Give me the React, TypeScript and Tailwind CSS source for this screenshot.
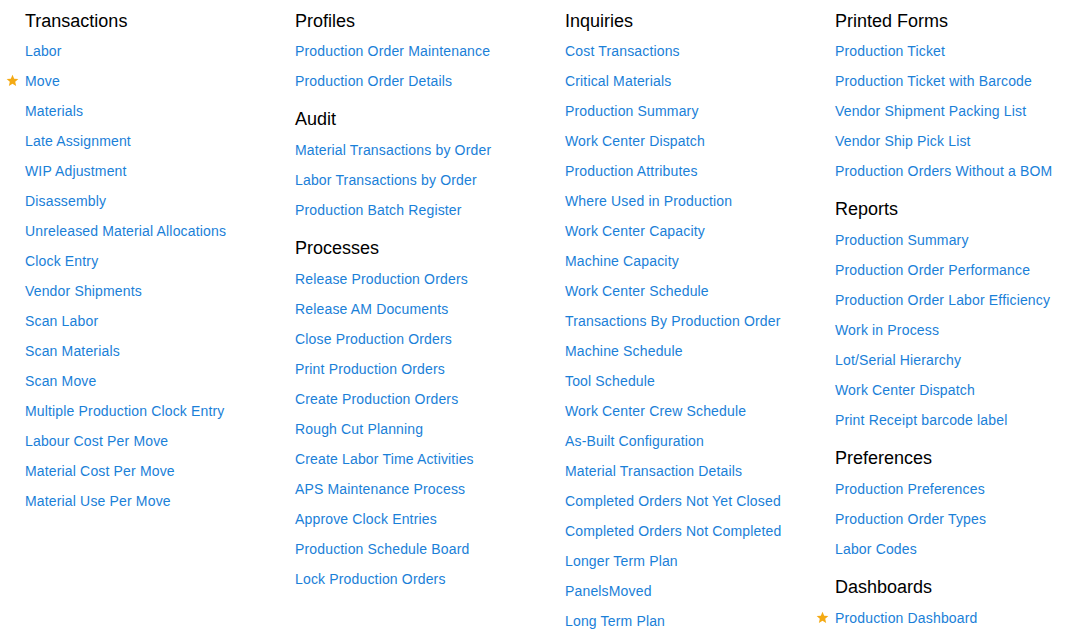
type Section = { title: string; links: { label: string; star?: boolean }[] };

const l = (labels: string[]) => labels.map((label) => ({ label }));

const columns: Section[][] = [
  [
    {
      title: 'Transactions',
      links: [
        { label: 'Labor' },
        { label: 'Move', star: true },
        ...l([
          'Materials',
          'Late Assignment',
          'WIP Adjustment',
          'Disassembly',
          'Unreleased Material Allocations',
          'Clock Entry',
          'Vendor Shipments',
          'Scan Labor',
          'Scan Materials',
          'Scan Move',
          'Multiple Production Clock Entry',
          'Labour Cost Per Move',
          'Material Cost Per Move',
          'Material Use Per Move',
        ]),
      ],
    },
  ],
  [
    { title: 'Profiles', links: l(['Production Order Maintenance', 'Production Order Details']) },
    {
      title: 'Audit',
      links: l(['Material Transactions by Order', 'Labor Transactions by Order', 'Production Batch Register']),
    },
    {
      title: 'Processes',
      links: l([
        'Release Production Orders',
        'Release AM Documents',
        'Close Production Orders',
        'Print Production Orders',
        'Create Production Orders',
        'Rough Cut Planning',
        'Create Labor Time Activities',
        'APS Maintenance Process',
        'Approve Clock Entries',
        'Production Schedule Board',
        'Lock Production Orders',
      ]),
    },
  ],
  [
    {
      title: 'Inquiries',
      links: l([
        'Cost Transactions',
        'Critical Materials',
        'Production Summary',
        'Work Center Dispatch',
        'Production Attributes',
        'Where Used in Production',
        'Work Center Capacity',
        'Machine Capacity',
        'Work Center Schedule',
        'Transactions By Production Order',
        'Machine Schedule',
        'Tool Schedule',
        'Work Center Crew Schedule',
        'As-Built Configuration',
        'Material Transaction Details',
        'Completed Orders Not Yet Closed',
        'Completed Orders Not Completed',
        'Longer Term Plan',
        'PanelsMoved',
        'Long Term Plan',
      ]),
    },
  ],
  [
    {
      title: 'Printed Forms',
      links: l([
        'Production Ticket',
        'Production Ticket with Barcode',
        'Vendor Shipment Packing List',
        'Vendor Ship Pick List',
        'Production Orders Without a BOM',
      ]),
    },
    {
      title: 'Reports',
      links: l([
        'Production Summary',
        'Production Order Performance',
        'Production Order Labor Efficiency',
        'Work in Process',
        'Lot/Serial Hierarchy',
        'Work Center Dispatch',
        'Print Receipt barcode label',
      ]),
    },
    {
      title: 'Preferences',
      links: l(['Production Preferences', 'Production Order Types', 'Labor Codes']),
    },
    { title: 'Dashboards', links: [{ label: 'Production Dashboard', star: true }] },
  ],
];

function Star() {
  return (
    <svg
      viewBox="0 0 24 24"
      className="absolute left-[-19px] top-[8px] h-[13px] w-[13px]"
      fill="#f4aa14"
    >
      <path d="M12 1.5l3.1 7.1 7.7.7-5.8 5.1 1.7 7.6L12 18l-6.7 4 1.7-7.6-5.8-5.1 7.7-.7z" />
    </svg>
  );
}

export default function App() {
  return (
    <div
      className="flex min-h-screen bg-white pl-[25px] pt-[9px]"
      style={{ fontFamily: '"Liberation Sans", Arial, sans-serif' }}
    >
      {columns.map((sections, ci) => (
        <div key={ci} className="w-[270px] shrink-0">
          {sections.map((s, si) => (
            <div key={s.title} className={si > 0 ? 'mt-[11px]' : ''}>
              <h2
                className={`text-[18px] leading-[24px] text-black ${si > 0 ? 'mb-[4px]' : 'mb-[3px]'}`}
              >
                {s.title}
              </h2>
              <ul>
                {s.links.map((link) => (
                  <li key={link.label} className="relative h-[30px] text-[14px] leading-[30px]">
                    {link.star && <Star />}
                    <a href="#" className="tracking-[0.16px] text-[#1a80d8]">
                      {link.label}
                    </a>
                  </li>
                ))}
              </ul>
            </div>
          ))}
        </div>
      ))}
    </div>
  );
}
